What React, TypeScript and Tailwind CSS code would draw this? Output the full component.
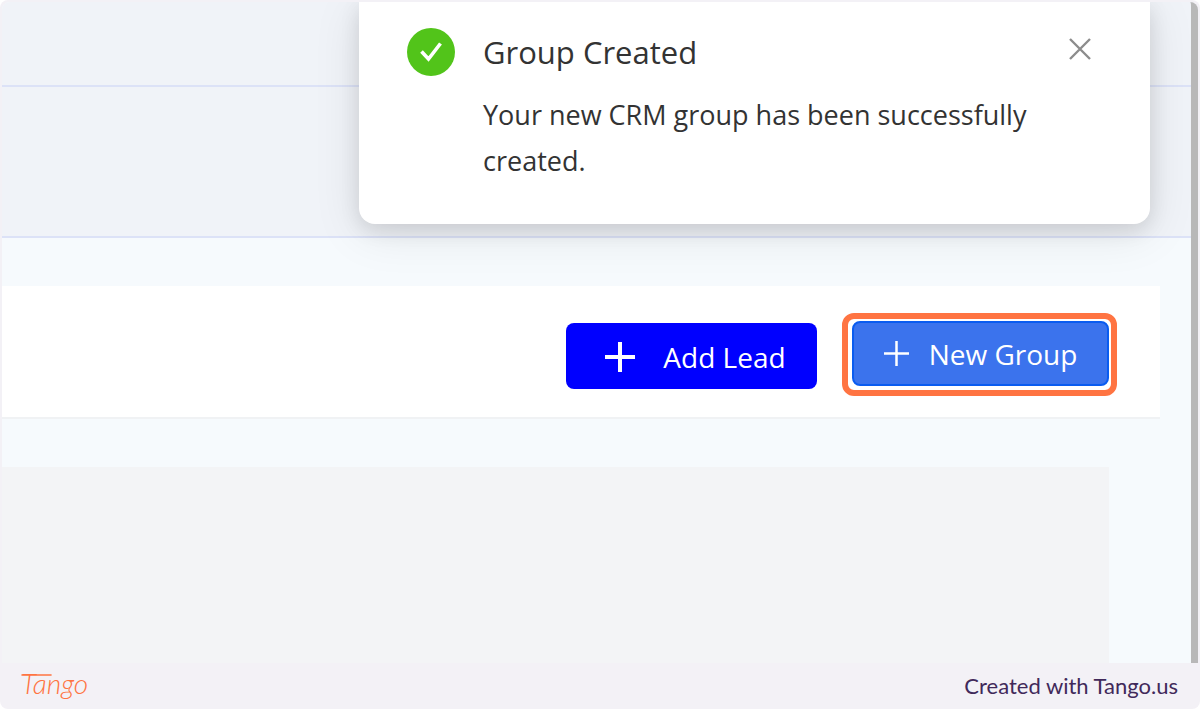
import { useState } from "react";

const PlusIcon = ({ className, strokeWidth }: { className: string; strokeWidth: number }) => (
  <svg viewBox="0 0 30 30" className={className} fill="none" stroke="currentColor" strokeWidth={strokeWidth}>
    <path d="M15 0V30M0 15H30" />
  </svg>
);

const Toast = ({ onClose }: { onClose: () => void }) => (
  <div
    role="status"
    className="absolute top-0 right-[41px] w-[791px] h-[222px] flex items-start bg-white rounded-b-2xl pl-12 pr-14 pt-[26px] shadow-[0_8px_48px_rgba(0,0,0,0.1),0_6px_20px_rgba(0,0,0,0.1)]"
  >
    <svg viewBox="0 0 48 48" className="w-12 h-12 shrink-0" fill="none">
      <circle cx="24" cy="24" r="24" fill="#52c41a" />
      <path d="M14.5 23.5L21.5 31L33.5 15.5" stroke="#fff" strokeWidth="3.6" />
    </svg>
    <div className="flex-1 ml-7 text-[#333333]">
      <h2 className="text-[31px] leading-[48px]">Group Created</h2>
      <p className="mt-4 text-[27px] leading-[46px]">
        Your new CRM group has been successfully created.
      </p>
    </div>
    <button type="button" aria-label="Close" onClick={onClose} className="absolute top-9 right-[59px] text-[#8c8c8c]">
      <svg viewBox="0 0 22 22" className="w-[22px] h-[22px]" fill="none" stroke="currentColor" strokeWidth="2.4">
        <path d="M1 1L21 21M21 1L1 21" />
      </svg>
    </button>
  </div>
);

const Logo = () => (
  <svg viewBox="0 0 80 44" className="w-20 h-11" role="img" aria-label="Tango" fill="none">
    <text x="1" y="30" fill="#ff7442" className="text-[28px] italic font-light font-['Lato',sans-serif]">
      Tango
    </text>
    <path d="M2 11H31" stroke="#ff7442" strokeWidth="1.6" strokeLinecap="round" />
  </svg>
);

const App = () => {
  const [showToast, setShowToast] = useState(true);

  return (
    <div className="min-h-screen flex flex-col bg-[#f3f1f6] rounded-lg overflow-hidden font-['Open_Sans','Noto_Sans',sans-serif]">
      <main className="relative flex-1 flex flex-col mt-[2px] mx-[2px] rounded-t-lg overflow-hidden bg-[#f6fafd] border-r-[7px] border-[#b8b8b8]">
        <div className="h-[85px] bg-[#f0f3f8] border-b-2 border-[#dce2f7]" />
        <div className="h-[151px] bg-[#f0f3f8] border-b-2 border-[#dce2f7]" />

        <section className="mt-12 mr-[31px] h-[133px] flex justify-end items-center gap-[25px] pt-[6px] pr-[43px] bg-white border-b-2 border-[#f0f2f4]">
          <button
            type="button"
            className="w-[251px] h-[66px] mt-[2px] pl-2 pt-[2px] flex items-center justify-center gap-7 rounded-lg bg-[#0000ff] text-white text-[28px] leading-9 font-medium"
          >
            <PlusIcon className="w-[30px] h-[30px]" strokeWidth={4} />
            Add Lead
          </button>
          <div className="p-1 pt-[2px] pr-[2px] border-6 border-[#ff7442] rounded-xl">
            <button
              type="button"
              className="w-[257px] h-[65px] flex items-center justify-center gap-5 rounded-lg border-2 border-[#0a5cf0] bg-[#3b73ed] text-white text-[28px] leading-9 font-medium"
            >
              <PlusIcon className="w-[25px] h-[25px]" strokeWidth={3} />
              New Group
            </button>
          </div>
        </section>

        <div className="flex-1 mt-12 mr-[82px] bg-[#f3f4f6]" />

        {showToast && <Toast onClose={() => setShowToast(false)} />}
      </main>

      <footer className="h-[46px] flex items-center justify-between pl-5 pr-[22px]">
        <Logo />
        <a href="#" className="text-[22px] leading-7 text-[#41295a] font-['Lato',sans-serif]">
          Created with Tango.us
        </a>
      </footer>
    </div>
  );
};

export default App;
